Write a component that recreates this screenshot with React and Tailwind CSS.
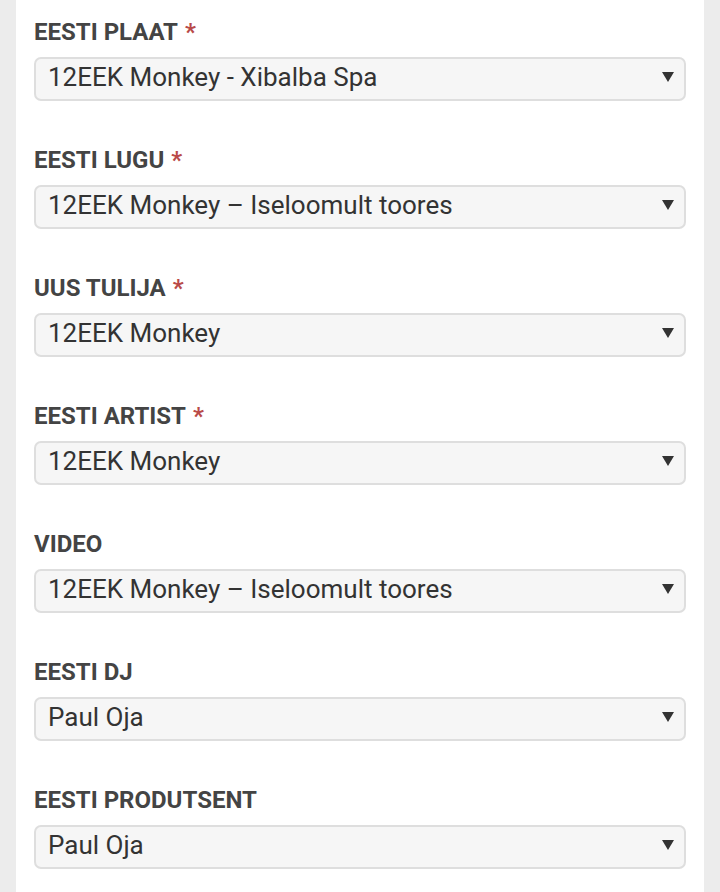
import React from 'react';

const fields = [
  { label: 'EESTI PLAAT', required: true, value: '12EEK Monkey - Xibalba Spa' },
  { label: 'EESTI LUGU', required: true, value: '12EEK Monkey – Iseloomult toores' },
  { label: 'UUS TULIJA', required: true, value: '12EEK Monkey' },
  { label: 'EESTI ARTIST', required: true, value: '12EEK Monkey' },
  { label: 'VIDEO', required: false, value: '12EEK Monkey – Iseloomult toores' },
  { label: 'EESTI DJ', required: false, value: 'Paul Oja' },
  { label: 'EESTI PRODUTSENT', required: false, value: 'Paul Oja' },
];

const Field = ({ label, required, value }) => (
  <div className="mb-[42px]">
    <label className="block h-[36px] text-[24px] leading-[34px] font-bold text-[#444444]">
      {label}
      {required && <span className="ml-[7px] text-[#b94a48]">*</span>}
    </label>
    <div className="mt-[6px] flex h-[44px] w-[652px] items-center justify-between rounded-[7px] border-2 border-[#dedede] bg-[#f6f6f6] pb-[5px] pl-[12px] pr-[10px]">
      <span className="text-[26px] leading-none text-[#333333]">{value}</span>
      <svg width="12" height="10" viewBox="0 0 12 10" className="shrink-0">
        <path d="M0 0 L12 0 L6 10 Z" fill="#333333" />
      </svg>
    </div>
  </div>
);

export default function App() {
  return (
    <div className="h-[892px] overflow-hidden bg-[#ececec] px-[16px] font-['Roboto',sans-serif]">
      <div className="min-h-[892px] bg-white px-[18px] pt-[15px]">
        {fields.map((f) => (
          <Field key={f.label} {...f} />
        ))}
      </div>
    </div>
  );
}
